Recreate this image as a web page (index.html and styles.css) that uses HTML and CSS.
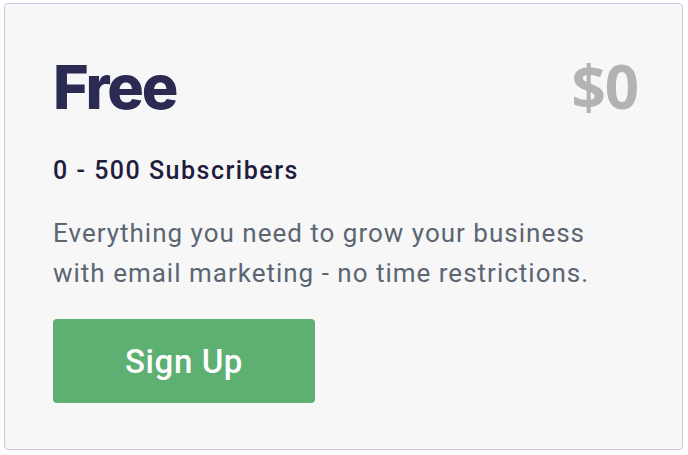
FILE: index.html
```html
<!DOCTYPE html>
<html>
<head>
<meta charset="utf-8">
<link rel="stylesheet" href="styles.css">
</head>
<body>
<div class="card">
  <div class="head">
    <h2 class="plan">Free</h2>
    <div class="price">$0</div>
  </div>
  <div class="subs">0 - 500 Subscribers</div>
  <p class="desc">Everything you need to grow your business with email marketing - no time restrictions.</p>
  <a class="btn" href="#">Sign Up</a>
</div>
</body>
</html>
```
FILE: styles.css
```css
html, body { margin: 0; padding: 0; background: #ffffff; }
body { padding: 3px 5px 0 4px; font-family: Roboto, "Liberation Sans", sans-serif; }
.card {
  box-sizing: border-box;
  width: 679px;
  height: 447px;
  border: 1px solid #c9c9e3;
  border-radius: 4px;
  background: #f7f7f8;
  padding: 40px 44px 0 48px;
}
.head { display: flex; justify-content: space-between; align-items: baseline; height: 84px; }
.plan {
  margin: 0;
  font-family: Inter, sans-serif;
  font-weight: 800;
  font-size: 61px;
  letter-spacing: -2.2px;
  color: #2b2a52;
  line-height: 84px;
}
.price {
  font-family: "Open Sans", sans-serif;
  font-weight: 700;
  font-size: 60px;
  color: #b3b3b5;
  line-height: 84px;
  letter-spacing: -1px;
}
.subs {
  margin-top: 27px;
  font-size: 25px;
  font-weight: 500;
  color: #1e1d3d;
  line-height: 32px;
  letter-spacing: 1.5px;
}
.desc {
  margin: 26px 0 0 0;
  font-size: 26px;
  line-height: 40px;
  color: #5b6672;
  width: 560px;
  letter-spacing: 1px;
}
.btn {
  margin-top: 26px;
  display: flex;
  align-items: center;
  justify-content: center;
  width: 262px;
  height: 84px;
  background: #5daf72;
  border-radius: 4px;
  color: #ffffff;
  font-size: 33px;
  font-weight: 500;
  letter-spacing: 0.6px;
  text-decoration: none;
}
```
